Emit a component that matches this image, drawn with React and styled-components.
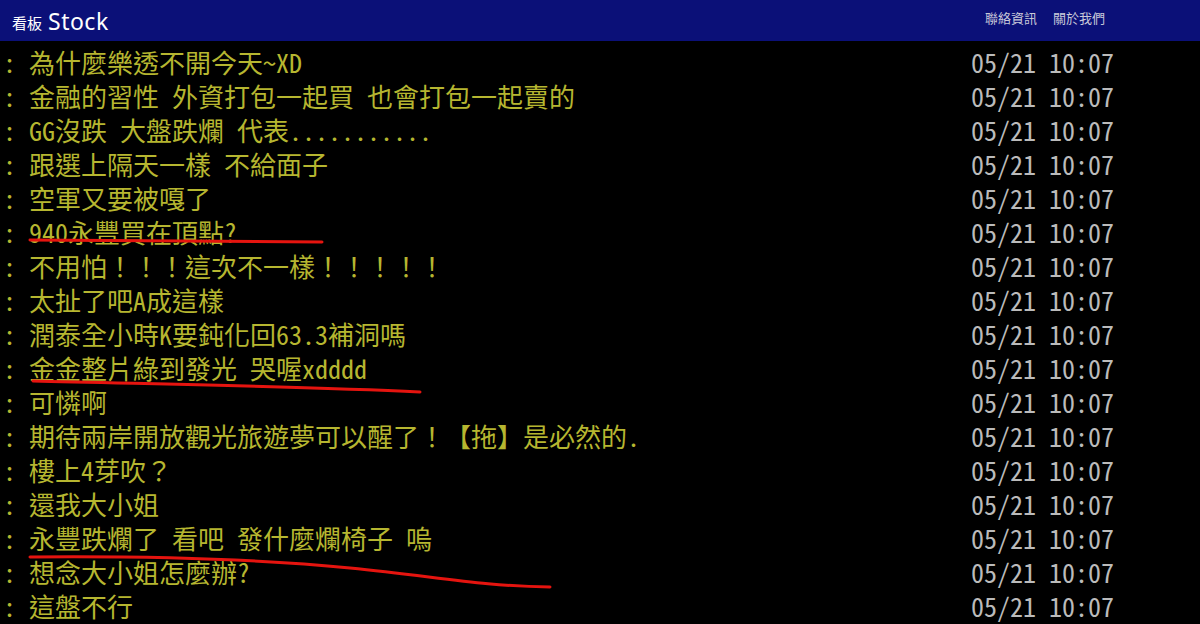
import React from 'react'
import styled, { createGlobalStyle } from 'styled-components'

const Global = createGlobalStyle`
  html, body {
    margin: 0;
    padding: 0;
    background: #000;
  }
`

const Page = styled.div`
  position: relative;
  width: 1200px;
  height: 624px;
  overflow: hidden;
  background: #000;
`

const TopBar = styled.div`
  height: 41px;
  background: #0b1078;
  display: flex;
  align-items: center;
  padding: 0 95px 0 12px;
  font-family: "Noto Sans", "Noto Sans CJK TC", sans-serif;
  color: #fff;
  .board {
    font-size: 15px;
    margin-right: 6px;
    margin-top: 4px;
  }
  .name {
    font-size: 23px;
    letter-spacing: 0.5px;
  }
`

const Links = styled.div`
  margin-left: auto;
  display: flex;
  gap: 16px;
  font-size: 13px;
  color: #c8c8d8;
  margin-top: -6px;
`

const List = styled.div`
  padding-top: 4px;
`

const Row = styled.div`
  display: grid;
  grid-template-columns: 968px auto;
  height: 34px;
  line-height: 34px;
  padding-left: 3px;
  font-family: "Noto Sans Mono CJK TC", "Noto Sans CJK TC", monospace;
  font-size: 26px;
  white-space: pre;
  .msg {
    color: #b6b630;
  }
  .time {
    color: #bbbbbb;
  }
`

const Marks = styled.svg`
  position: absolute;
  left: 0;
  top: 0;
  pointer-events: none;
`

const pushes = [
  '為什麼樂透不開今天~XD',
  '金融的習性 外資打包一起買 也會打包一起賣的',
  'GG沒跌 大盤跌爛 代表...........',
  '跟選上隔天一樣 不給面子',
  '空軍又要被嘎了',
  '940永豐買在頂點?',
  '不用怕！！！這次不一樣！！！！！',
  '太扯了吧A成這樣',
  '潤泰全小時K要鈍化回63.3補洞嗎',
  '金金整片綠到發光 哭喔xdddd',
  '可憐啊',
  '期待兩岸開放觀光旅遊夢可以醒了！【拖】是必然的.',
  '樓上4芽吹？',
  '還我大小姐',
  '永豐跌爛了 看吧 發什麼爛椅子 嗚',
  '想念大小姐怎麼辦?',
  '這盤不行',
]

export default function App() {
  return (
    <Page>
      <Global />
      <TopBar>
        <span className="board">看板</span>
        <span className="name">Stock</span>
        <Links>
          <span>聯絡資訊</span>
          <span>關於我們</span>
        </Links>
      </TopBar>
      <List>
        {pushes.map((text, i) => (
          <Row key={i}>
            <span className="msg">{': ' + text}</span>
            <span className="time">05/21 10:07</span>
          </Row>
        ))}
      </List>
      <Marks width="1200" height="624" viewBox="0 0 1200 624">
        <g fill="none" stroke="#e5140f" strokeWidth="3" strokeLinecap="round">
          <path d="M30 240 C 120 241, 230 241, 322 242" />
          <path d="M33 381 C 150 384, 300 386, 420 392" />
          <path d="M30 557 C 150 556, 260 559, 350 568 S 480 586, 550 587" />
        </g>
      </Marks>
    </Page>
  )
}
